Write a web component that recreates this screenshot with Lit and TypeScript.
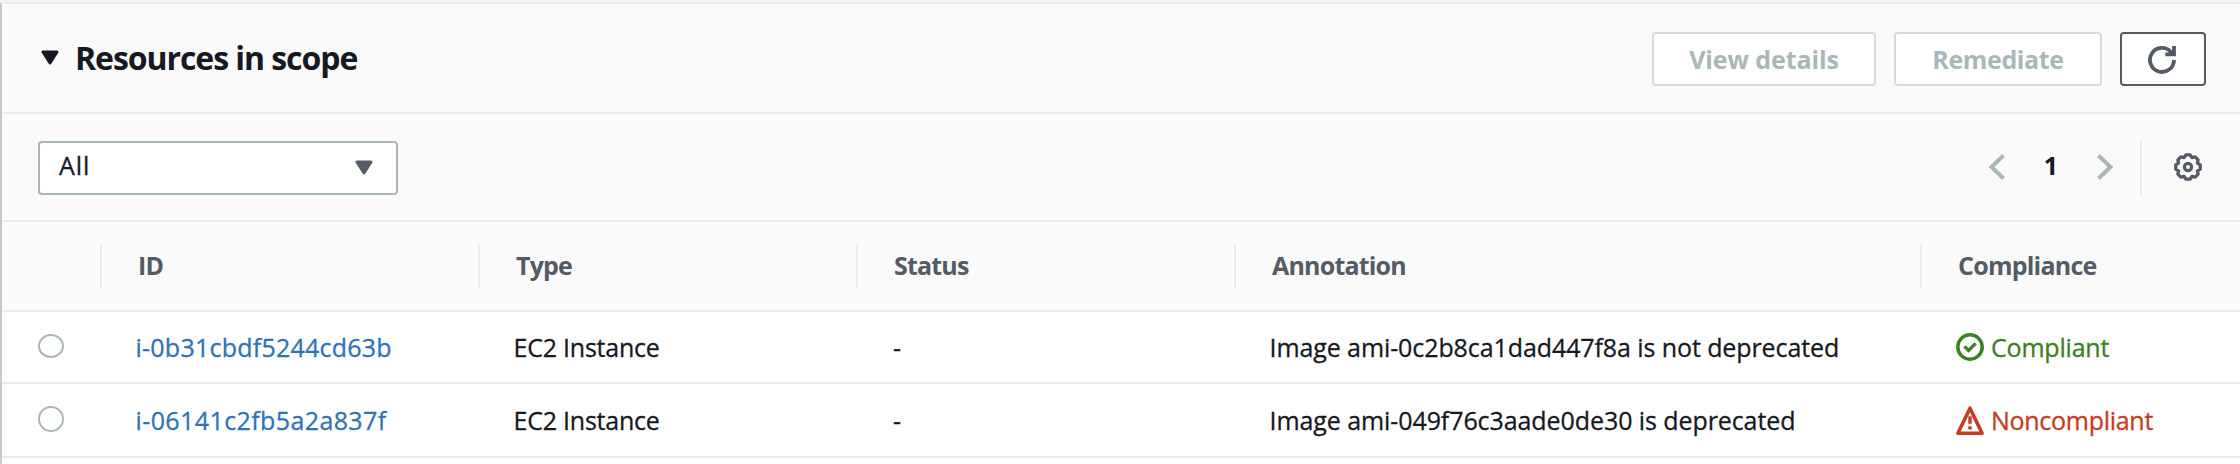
import { LitElement, html, css, svg } from "lit";
import { customElement, state } from "lit/decorators.js";
import { styleMap } from "lit/directives/style-map.js";

interface Label {
  text: string;
  tracking: number;
}

interface Resource {
  id: Label;
  type: Label;
  status: Label;
  annotation: Label;
  compliance: Label;
  compliant: boolean;
}

const label = (text: string, tracking = 0): Label => ({ text, tracking });

const COLUMNS: Label[] = [
  label("ID", -0.9),
  label("Type", -0.8),
  label("Status", -0.8),
  label("Annotation", -0.8),
  label("Compliance", -0.76),
];

const RESOURCES: Resource[] = [
  {
    id: label("i-0b31cbdf5244cd63b", 0.24),
    type: label("EC2 Instance", -0.22),
    status: label("-"),
    annotation: label("Image ami-0c2b8ca1dad447f8a is not deprecated", -0.09),
    compliance: label("Compliant", -0.2),
    compliant: true,
  },
  {
    id: label("i-06141c2fb5a2a837f", 0.4),
    type: label("EC2 Instance", -0.22),
    status: label("-"),
    annotation: label("Image ami-049f76c3aade0de30 is deprecated", -0.08),
    compliance: label("Noncompliant", -0.28),
    compliant: false,
  },
];

// Outline of an eight-toothed cog centred on 16,16.
const gearPath = (() => {
  const points: string[] = [];
  const push = (deg: number, r: number) => {
    const a = (deg * Math.PI) / 180;
    points.push(`${(16 + r * Math.sin(a)).toFixed(2)} ${(16 - r * Math.cos(a)).toFixed(2)}`);
  };
  for (let i = 0; i < 8; i++) {
    push(i * 45 - 10, 12.4);
    push(i * 45 + 10, 12.4);
    push(i * 45 + 22.5, 10.2);
  }
  return `M${points.join("L")}Z`;
})();

const icon = (body: unknown, size = 32) =>
  html`<svg class="icon" width=${size} height=${size} viewBox="0 0 ${size} ${size}" aria-hidden="true">${body}</svg>`;

const caret = html`<svg class="icon" width="18" height="16" viewBox="0 0 18 16" aria-hidden="true">
  <path d="M2 2H16L9 13Z" fill="currentColor" stroke="currentColor" stroke-width="3" stroke-linejoin="round"></path>
</svg>`;

const refreshIcon = icon(svg`<g fill="none" stroke="currentColor" stroke-width="3.8">
  <path d="M28 16A12 12 0 1 1 25 8L26.5 10.5"></path><path d="M28 2V10.3H19.3"></path></g>`);

const gearIcon = icon(svg`<g fill="none" stroke="currentColor" stroke-linejoin="round">
  <path d=${gearPath} stroke-width="3.3"></path><circle cx="16" cy="16" r="3.6" stroke-width="3.2"></circle></g>`);

const previousIcon = html`<svg class="icon" width="18" height="28" viewBox="0 0 18 28" aria-hidden="true">
  <path d="M15.5 2.5L3.5 14L15.5 25.5" fill="none" stroke="currentColor" stroke-width="4"></path></svg>`;

const nextIcon = html`<svg class="icon" width="18" height="28" viewBox="0 0 18 28" aria-hidden="true">
  <path d="M2.5 2.5L14.5 14L2.5 25.5" fill="none" stroke="currentColor" stroke-width="4"></path></svg>`;

const successIcon = html`<svg class="icon" width="28" height="30" viewBox="0 0 28 30" aria-hidden="true">
  <g fill="none" stroke="currentColor">
    <circle cx="14" cy="15" r="12.2" stroke-width="3.5"></circle><path stroke-width="3.2" d="M8.4 14.4L12.6 18.4L19.6 11.4"></path></g></svg>`;

const warningIcon = html`<svg class="icon" width="28" height="30" viewBox="0 0 28 30" aria-hidden="true">
  <path d="M14 3.2L1.9 28.2H26.1Z" fill="none" stroke="currentColor" stroke-width="3.6" stroke-linejoin="round"></path>
  <path d="M14 11.2V18.8M14 21.2V24.4" fill="none" stroke="currentColor" stroke-width="3.4"></path></svg>`;

@customElement("app-root")
export class AppRoot extends LitElement {
  @state() private open = true;

  static styles = css`
    :host {
      display: block;
      height: 464px;
      overflow: hidden;
      font: 400 25px/34px "Open Sans", "Noto Sans", sans-serif;
      color: #16191f;
      background: #f2f3f3;
    }
    * { box-sizing: border-box; }
    .icon { display: block; flex: none; }
    .page { padding-top: 2px; height: 464px; }
    .panel {
      height: 462px;
      border-top: 2px solid #eaeded;
      border-left: 2px solid #c3cbcb;
      background: #fff;
    }
    .bar {
      display: flex;
      align-items: center;
      justify-content: space-between;
      height: 110px;
      background: #fafafa;
      border-bottom: 2px solid #eaebeb;
    }
    .header { padding: 0 34px 0 39px; }
    .heading { display: flex; align-items: center; gap: 16px; }
    .heading .icon { margin-bottom: 1px; }
    h2 { margin: 0; font-size: 32px; line-height: 44px; font-weight: 700; letter-spacing: -1.06px; }
    .actions { display: flex; gap: 18px; padding-top: 2px; }
    .button {
      display: flex;
      align-items: center;
      justify-content: center;
      height: 54px;
      padding: 0;
      border: 2px solid #545b64;
      border-radius: 4px;
      background: #fff;
      color: #545b64;
      font: inherit;
      font-weight: 700;
    }
    .button:disabled { border-color: #d5dbdb; color: #aab7b8; }
    .details { width: 224px; padding-bottom: 1px; letter-spacing: -0.09px; }
    .remediate { width: 208px; padding-bottom: 1px; letter-spacing: -0.37px; }
    .refresh { width: 86px; padding: 2px 2px 0 0; }
    .filters { height: 108px; padding: 0 34px 0 36px; }
    .select {
      display: flex;
      align-items: center;
      justify-content: space-between;
      width: 360px;
      height: 54px;
      margin-top: 2px;
      padding: 0 23px 0 19px;
      border: 2px solid #aab7b8;
      border-radius: 4px;
      background: #fff;
    }
    .value { padding-bottom: 7px; letter-spacing: 1px; -webkit-text-stroke: 0.3px; }
    .select .icon { color: #545b64; }
    .tools { display: flex; align-items: center; height: 54px; margin-top: 2px; }
    .pager { display: flex; align-items: center; color: #aab7b8; padding-right: 26px; }
    .pager .icon { margin-bottom: 2px; }
    .current { width: 90px; padding: 0 0 7px; text-align: center; font-weight: 700; color: #16191f; }
    .settings {
      display: flex;
      align-items: center;
      height: 54px;
      padding: 0 2px 2px 30px;
      border-left: 2px solid #eaebeb;
      color: #545b64;
    }
    .row {
      display: grid;
      grid-template-columns: 100px 378px 378px 378px 686px 1fr;
      align-items: center;
      height: 74px;
      border-bottom: 2px solid #eaebeb;
    }
    .columns { height: 90px; background: #fafafa; }
    .row.first { height: 72px; }
    .columns > div {
      height: 44px;
      padding: 4px 0 0 36px;
      border-right: 2px solid #eaebeb;
      font-weight: 700;
      color: #545b64;
    }
    .columns > div:last-child { border-right: 0; }
    .cell { padding-left: 33.5px; white-space: nowrap; -webkit-text-stroke: 0.3px; }
    .status { padding-left: 35px; }
    .radio {
      width: 26px;
      height: 26px;
      margin: 0 0 2px 36px;
      border: 2px solid #aab7b8;
      border-radius: 50%;
      background: #fff;
    }
    .first .radio { height: 24px; }
    .link { color: #2e73b8; text-decoration: none; }
    .compliance { display: flex; align-items: center; gap: 7px; padding-left: 34px; }
    .success { color: #3c8021; }
    .warning { color: #c23d22; }
  `;

  private renderLabel({ text, tracking }: Label) {
    return html`<span style=${styleMap({ letterSpacing: `${tracking}px` })}>${text}</span>`;
  }

  private renderRow(item: Resource, index: number) {
    return html`<div class="row ${index === 0 ? "first" : ""}" role="row">
      <div class="radio" role="radio" aria-checked="false"></div>
      <div class="cell"><a class="link">${this.renderLabel(item.id)}</a></div>
      <div class="cell">${this.renderLabel(item.type)}</div>
      <div class="cell status">${this.renderLabel(item.status)}</div>
      <div class="cell">${this.renderLabel(item.annotation)}</div>
      <div class="cell compliance ${item.compliant ? "success" : "warning"}">
        ${item.compliant ? successIcon : warningIcon}${this.renderLabel(item.compliance)}
      </div>
    </div>`;
  }

  render() {
    return html`<div class="page"><section class="panel">
      <header class="bar header">
        <div class="heading" @click=${() => (this.open = !this.open)}>${caret}<h2>Resources in scope</h2></div>
        <div class="actions">
          <button class="button details" disabled>View details</button>
          <button class="button remediate" disabled>Remediate</button>
          <button class="button refresh">${refreshIcon}</button>
        </div>
      </header>
      ${this.open
        ? html`<div class="bar filters">
              <div class="select"><span class="value">All</span>${caret}</div>
              <div class="tools">
                <div class="pager">${previousIcon}<span class="current">1</span>${nextIcon}</div>
                <div class="settings">${gearIcon}</div>
              </div>
            </div>
            <div class="table" role="table">
              <div class="row columns" role="row">
                <div></div>
                ${COLUMNS.map((column) => html`<div>${this.renderLabel(column)}</div>`)}
              </div>
              ${RESOURCES.map((item, index) => this.renderRow(item, index))}
            </div>`
        : null}
    </section></div>`;
  }
}
